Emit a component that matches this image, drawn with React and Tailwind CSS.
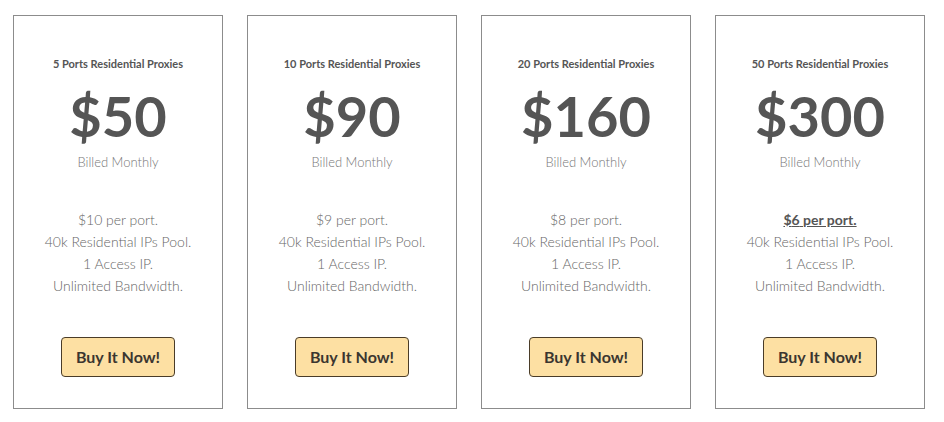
const plans = [
  { ports: 5, price: 50, perPort: 10 },
  { ports: 10, price: 90, perPort: 9 },
  { ports: 20, price: 160, perPort: 8 },
  { ports: 50, price: 300, perPort: 6, highlight: true },
];

function PlanCard({ plan }) {
  return (
    <div className="w-[210px] h-[394px] border border-[#8c8c8c] bg-white flex flex-col items-center text-center">
      <div className="mt-[40px] text-[11px] font-bold text-[#555] leading-[16px]">
        {plan.ports} Ports Residential Proxies
      </div>
      <div className="mt-[12px] text-[56px] font-bold text-[#555] leading-[64px]">
        ${plan.price}
      </div>
      <div className="mt-[5px] text-[13px] font-light text-[#777] leading-[18px]">Billed Monthly</div>

      <div className="mt-[38px] text-[14px] font-light text-[#666] leading-[22px]">
        {plan.highlight ? (
          <div className="font-bold underline text-[#555]">${plan.perPort} per port.</div>
        ) : (
          <div>${plan.perPort} per port.</div>
        )}
        <div>40k Residential IPs Pool.</div>
        <div>1 Access IP.</div>
        <div>Unlimited Bandwidth.</div>
      </div>

      <button
        type="button"
        className="mt-[40px] w-[114px] h-[40px] rounded-[4px] border border-[#4a3c28] bg-[#fde0a3] text-[16px] font-bold text-[#3b3630]"
      >
        Buy It Now!
      </button>
    </div>
  );
}

export default function App() {
  return (
    <div className="w-[944px] h-[422px] bg-white font-['Lato','Liberation_Sans',sans-serif]">
      <div className="flex gap-[24px] pl-[13px] pt-[15px]">
        {plans.map((p) => (
          <PlanCard key={p.ports} plan={p} />
        ))}
      </div>
    </div>
  );
}
